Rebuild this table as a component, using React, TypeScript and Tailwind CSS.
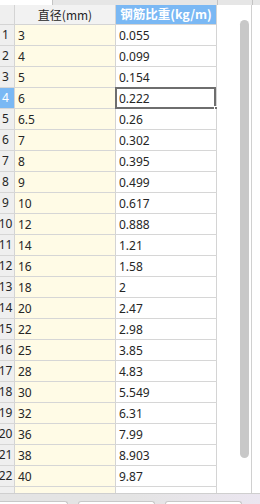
import React from "react";

const rows: [string, string][] = [
  ["3", "0.055"],
  ["4", "0.099"],
  ["5", "0.154"],
  ["6", "0.222"],
  ["6.5", "0.26"],
  ["7", "0.302"],
  ["8", "0.395"],
  ["9", "0.499"],
  ["10", "0.617"],
  ["12", "0.888"],
  ["14", "1.21"],
  ["16", "1.58"],
  ["18", "2"],
  ["20", "2.47"],
  ["22", "2.98"],
  ["25", "3.85"],
  ["28", "4.83"],
  ["30", "5.549"],
  ["32", "6.31"],
  ["36", "7.99"],
  ["38", "8.903"],
  ["40", "9.87"],
  ["", ""],
];

export default function App() {
  return (
    <div
      className="w-[260px] h-[504px] bg-white overflow-hidden flex flex-col text-[#262626]"
      style={{ fontFamily: '"Noto Sans", "Noto Sans CJK SC", sans-serif' }}
    >
      {/* top strip */}
      <div className="h-[5px] flex shrink-0">
        <div className="w-[52px] bg-white" />
        <div className="w-[165px] bg-[#e6e6e6] border-l border-[#c4c4c4]" />
        <div className="w-[35px] bg-[#e6e6e6] border-l border-[#c4c4c4]" />
        <div className="flex-1 bg-[#e6e6e6] border-l border-[#c4c4c4]" />
      </div>

      {/* main */}
      <div className="flex h-[488px] shrink-0">
        <div className="w-[217px] flex flex-col overflow-hidden">
          {/* header */}
          <div className="flex h-[20px] shrink-0 border-b border-[#d4d4d4]">
            <div className="w-[15px] bg-[#efefef] border-r border-[#d4d4d4]" />
            <div className="w-[101px] bg-[#f2f2f2] border-r border-[#d4d4d4] flex items-center justify-center text-[12px] leading-none">
              <span style={{ fontFamily: '"Noto Sans CJK SC", sans-serif' }}>直径(mm)</span>
            </div>
            <div className="w-[101px] bg-[#7ab8f4] border-r border-[#d4d4d4] flex items-center justify-center text-[12.5px] font-bold text-white leading-none">
              <span style={{ fontFamily: '"Noto Sans CJK SC", sans-serif' }}>钢筋比重(kg/m)</span>
            </div>
          </div>
          {rows.map((r, i) => {
            const sel = i === 3;
            return (
              <div key={i} className="flex h-[21px] shrink-0 border-b border-[#d6d6d6] text-[12px]">
                <div
                  className={
                    sel
                      ? "w-[15px] bg-[#7ab8f4] text-white border-r border-[#d4d4d4] flex items-center justify-center pr-[3px] overflow-visible whitespace-nowrap"
                      : "w-[15px] bg-[#efefef] border-r border-[#d4d4d4] flex items-center justify-center pr-[3px] overflow-visible whitespace-nowrap"
                  }
                >
                  {r[0] === "" ? "" : i + 1}
                </div>
                <div className="w-[101px] bg-[#fffbe6] border-r border-[#d4d4d4] flex items-center pl-[3px] pt-[2px]">
                  {r[0]}
                </div>
                <div className="relative w-[101px] bg-white border-r border-[#d4d4d4] flex items-center pl-[3px] pt-[2px]">
                  {r[1]}
                  {sel && (
                    <>
                      <div className="absolute -left-[1px] -top-[1px] w-[101px] h-[22px] border-2 border-[#6e6e6e]" />
                      <div className="absolute right-[-3px] bottom-[-3px] w-[5px] h-[5px] bg-[#6e6e6e] border border-white" />
                    </>
                  )}
                </div>
              </div>
            );
          })}
        </div>
        {/* scrollbar region */}
        <div className="w-[35px] bg-white border-r border-[#d0d0d0] pl-[23px] pt-[15px]">
          <div className="w-[9px] h-[438px] rounded-full bg-[#c8c8c8]" />
        </div>
        <div className="flex-1 bg-white" />
      </div>

      {/* bottom tabs band */}
      <div className="h-[11px] shrink-0 border-t border-[#cfcfcf] bg-gradient-to-r from-[#e4e4e4] via-[#e4e4e4] to-[#ebe6f0] flex items-end">
        <div className="w-[68px] h-[3px] bg-white border-t border-r border-[#c8c8c8] rounded-tr-[4px]" />
        <div className="ml-[10px] w-[77px] h-[3px] bg-white border-t border-x border-[#c8c8c8] rounded-t-[4px]" />
        <div className="ml-[10px] w-[77px] h-[3px] bg-white border-t border-x border-[#c8c8c8] rounded-t-[4px]" />
      </div>
    </div>
  );
}
